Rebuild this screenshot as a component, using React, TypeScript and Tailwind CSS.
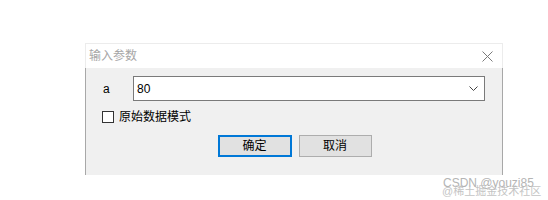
import React from "react";

const cjk = '"Liberation Sans", "Noto Sans CJK SC", sans-serif';

export default function App() {
  return (
    <div
      className="relative h-[200px] w-[548px] overflow-hidden bg-white pl-[85px] pt-[43px]"
      style={{ fontFamily: cjk }}
    >
      <div className="flex w-[418px] flex-col">
        {/* title bar */}
        <div className="flex h-[25px] items-center justify-between border-x border-t border-[#ececec] bg-white pl-[3px] pr-[9px]">
          <span className="text-[12px] leading-none text-[#a6a6a6]">输入参数</span>
          <svg width="11" height="11" viewBox="0 0 11 11" className="mt-[1px]">
            <path d="M0.5 0.5 L10.5 10.5 M10.5 0.5 L0.5 10.5" stroke="#7a7a7a" strokeWidth="1" fill="none" />
          </svg>
        </div>
        {/* body */}
        <div className="flex h-[107px] flex-col border-x border-[#a8a8a8] bg-[#f0f0f0] pt-[8px]">
          <div className="flex h-[25px] items-center pl-[17px]">
            <span className="w-[30px] text-[12px] leading-none text-black">a</span>
            <div className="flex h-[25px] w-[352px] items-center justify-between border border-[#7a7a7a] bg-white pl-[3px] pr-[6px]">
              <span className="text-[12px] leading-none text-black">80</span>
              <svg width="9" height="5" viewBox="0 0 9 5">
                <path d="M0.5 0.5 L4.5 4.5 L8.5 0.5" stroke="#444" strokeWidth="1" fill="none" />
              </svg>
            </div>
          </div>
          <div className="mt-[10px] flex h-[12px] items-center pl-[16px]">
            <div className="h-[12px] w-[12px] border border-[#333] bg-white" />
            <span className="ml-[5px] text-[12px] leading-none text-black">原始数据模式</span>
          </div>
          <div className="mt-[12px] flex justify-center gap-[7px] pl-[1px]">
            <div className="flex h-[22px] w-[74px] items-center justify-center border-2 border-[#0078d7] bg-[#e1e1e1] text-[12px] leading-none text-black">
              确定
            </div>
            <div className="flex h-[22px] w-[73px] items-center justify-center border border-[#adadad] bg-[#e1e1e1] text-[12px] leading-none text-black">
              取消
            </div>
          </div>
        </div>
      </div>
      {/* watermark */}
      <div className="absolute left-[443px] top-[177px] text-[12px] leading-none text-[#b4b4b4]">
        CSDN @youzi85
      </div>
      <div className="absolute left-[442px] top-[186px] text-[11px] leading-none text-[#c4c4c4]">
        @稀土掘金技术社区
      </div>
    </div>
  );
}
